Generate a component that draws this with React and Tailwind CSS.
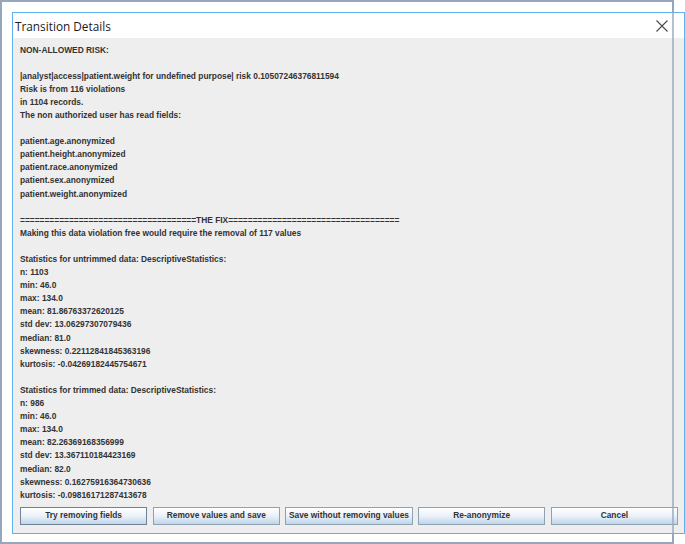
import React from "react";

const lines = [
  "NON-ALLOWED RISK:",
  "",
  "|analyst|access|patient.weight for undefined purpose| risk 0.10507246376811594",
  "Risk is from 116 violations",
  "in 1104 records.",
  "The non authorized user has read fields:",
  "",
  "patient.age.anonymized",
  "patient.height.anonymized",
  "patient.race.anonymized",
  "patient.sex.anonymized",
  "patient.weight.anonymized",
  "",
  "====================================THE FIX===================================",
  "Making this data violation free would require the removal of 117 values",
  "",
  "Statistics for untrimmed data: DescriptiveStatistics:",
  "n: 1103",
  "min: 46.0",
  "max: 134.0",
  "mean: 81.86763372620125",
  "std dev: 13.06297307079436",
  "median: 81.0",
  "skewness: 0.22112841845363196",
  "kurtosis: -0.04269182445754671",
  "",
  "Statistics for trimmed data: DescriptiveStatistics:",
  "n: 986",
  "min: 46.0",
  "max: 134.0",
  "mean: 82.26369168356999",
  "std dev: 13.367110184423169",
  "median: 82.0",
  "skewness: 0.16275916364730636",
  "kurtosis: -0.09816171287413678",
];

const buttons = [
  "Try removing fields",
  "Remove values and save",
  "Save without removing values",
  "Re-anonymize",
  "Cancel",
];

export default function App() {
  return (
    <div className="relative w-[685px] h-[544px] bg-white overflow-hidden">
      {/* background window */}
      <div className="absolute left-0 top-0 w-[674px] h-[544px] border-2 border-[#95a7ba] bg-white" />

      {/* dialog */}
      <div className="absolute left-[12px] top-[12px] w-[673px] h-[522px] border border-[#62b0ee] bg-white flex flex-col">
        <div className="h-[25px] shrink-0 bg-white flex items-center justify-between pl-[2px] pr-[16px]">
          <span
            className="text-[11.8px] text-[#1a1a1a] leading-none mt-[2px]"
            style={{ fontFamily: '"Open Sans", "Noto Sans", sans-serif' }}
          >
            Transition Details
          </span>
          <svg width="12" height="12" viewBox="0 0 12 12" className="mt-[1px]">
            <path d="M0.5 0.5 L11.5 11.5 M11.5 0.5 L0.5 11.5" stroke="#4a4a4a" strokeWidth="1.1" fill="none" />
          </svg>
        </div>
        <div
          className="flex-1 bg-[#eeeeee] pl-[7px] pr-[6px] pt-[5.5px] flex flex-col"
          style={{ fontFamily: '"Liberation Sans", Arial, sans-serif' }}
        >
          <div className="text-[8.4px] leading-[13.1px] font-bold text-[#333333] whitespace-pre">
            {lines.map((l, i) => (
              <div key={i} className="h-[13.1px]">
                {l}
              </div>
            ))}
          </div>
          <div className="mt-[5px] grid grid-cols-5 gap-[5.5px]">
            {buttons.map((b, i) => (
              <div
                key={b}
                className={
                  "h-[18px] flex items-center justify-center text-[8.4px] font-bold text-[#333333] border bg-gradient-to-b from-white via-[#eaf1f9] to-[#c0d5ea] " +
                  (i === 0 ? "border-[#6f8297]" : "border-[#8ea2b6]")
                }
              >
                {b}
              </div>
            ))}
          </div>
        </div>
      </div>

      {/* background window right edge showing through */}
      <div className="absolute left-[672px] top-0 w-[2px] h-[544px] bg-[#95a7ba]/70 pointer-events-none" />
    </div>
  );
}
